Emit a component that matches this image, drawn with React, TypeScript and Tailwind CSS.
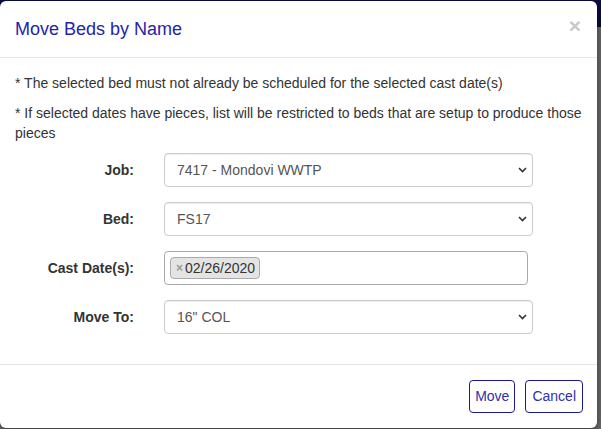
import React from 'react';

const Chevron = () => (
  <svg width="9" height="6" viewBox="0 0 9 6" className="shrink-0">
    <path d="M1 1 L4.5 4.5 L8 1" fill="none" stroke="#333" strokeWidth="1.6" />
  </svg>
);

function SelectBox({ value }: { value: string }) {
  return (
    <div className="flex h-[34px] w-[369px] items-center justify-between rounded-[4px] border border-[#cccccc] bg-white pl-[12px] pr-[5px] shadow-[inset_0_1px_1px_rgba(0,0,0,0.075)]">
      <span className="text-[14px] text-[#555555]">{value}</span>
      <Chevron />
    </div>
  );
}

function FormRow({ label, children }: { label: string; children: React.ReactNode }) {
  return (
    <div className="mb-[15px] flex items-center">
      <label className="w-[134px] shrink-0 text-right text-[14px] font-bold text-[#333333]">{label}</label>
      <div className="ml-[30px]">{children}</div>
    </div>
  );
}

export default function App() {
  return (
    <div
      className="relative h-[429px] w-[601px] overflow-hidden bg-[#6b6b6b]"
      style={{ fontFamily: '"Liberation Sans", Arial, sans-serif' }}
    >
      <div className="h-[27px] w-full bg-[#0b0b45]" />
      <div className="absolute left-0 top-[1px] flex h-[427px] w-[597px] flex-col rounded-[6px] bg-white shadow-[0_3px_9px_rgba(0,0,0,0.5)]">
        {/* header */}
        <div className="flex h-[57px] items-center justify-between border-b border-[#e5e5e5] px-[15px]">
          <h4 className="text-[18px] text-[#2424a8]">Move Beds by Name</h4>
          <span className="-mt-[7px] mr-[1px] text-[21px] font-bold leading-none text-[#c8c8c8]">×</span>
        </div>

        {/* body */}
        <div className="px-[15px] py-[15px] text-[14px] leading-[20px] text-[#333333]">
          <p className="mb-[10px]">* The selected bed must not already be scheduled for the selected cast date(s)</p>
          <p className="mb-[10px]">
            * If selected dates have pieces, list will be restricted to beds that are setup to produce those pieces
          </p>
          <div className="-mx-[15px]">
            <FormRow label="Job:">
              <SelectBox value="7417 - Mondovi WWTP" />
            </FormRow>
            <FormRow label="Bed:">
              <SelectBox value="FS17" />
            </FormRow>
            <FormRow label="Cast Date(s):">
              <div className="flex h-[34px] w-[364px] items-center rounded-[4px] border border-[#aaaaaa] bg-white pl-[5px]">
                <span className="flex h-[22px] items-center rounded-[4px] border border-[#aaaaaa] bg-[#e4e4e4] pl-[5px] pr-[4px] text-[14px] text-[#333333]">
                  <span className="mr-[2px] text-[12px] font-bold text-[#999999]">×</span>
                  02/26/2020
                </span>
              </div>
            </FormRow>
            <FormRow label="Move To:">
              <SelectBox value={'16" COL'} />
            </FormRow>
          </div>
        </div>

        {/* footer */}
        <div className="mt-auto flex justify-end gap-[10px] border-t border-[#e5e5e5] px-[14px] py-[15px]">
          <button className="h-[33px] rounded-[4px] border border-[#1a1a8c] bg-white px-[5px] text-[14px] text-[#3030a8]">
            Move
          </button>
          <button className="h-[33px] rounded-[4px] border border-[#1a1a8c] bg-white px-[6px] text-[14px] text-[#3030a8]">
            Cancel
          </button>
        </div>
      </div>
    </div>
  );
}
